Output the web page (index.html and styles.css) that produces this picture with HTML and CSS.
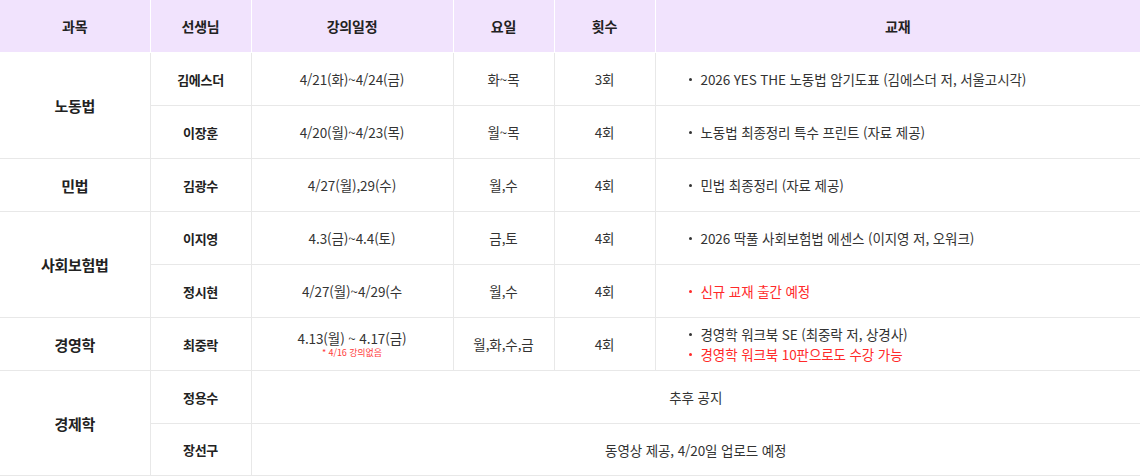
FILE: index.html
```html
<!DOCTYPE html>
<html lang="ko">
<head>
<meta charset="utf-8">
<link rel="stylesheet" href="styles.css">
</head>
<body>
<table class="sched">
  <colgroup>
    <col class="c-subj"><col class="c-teach"><col class="c-date"><col class="c-day"><col class="c-cnt"><col class="c-book">
  </colgroup>
  <thead>
    <tr><th>과목</th><th>선생님</th><th>강의일정</th><th>요일</th><th>횟수</th><th>교재</th></tr>
  </thead>
  <tbody>
    <tr>
      <td rowspan="2" class="subj">노동법</td>
      <td class="teach">김에스더</td><td>4/21(화)~4/24(금)</td><td>화~목</td><td>3회</td>
      <td class="book"><ul><li>2026 YES THE 노동법 암기도표 (김에스더 저, 서울고시각)</li></ul></td>
    </tr>
    <tr>
      <td class="teach">이장훈</td><td>4/20(월)~4/23(목)</td><td>월~목</td><td>4회</td>
      <td class="book"><ul><li>노동법 최종정리 특수 프린트 (자료 제공)</li></ul></td>
    </tr>
    <tr>
      <td class="subj">민법</td>
      <td class="teach">김광수</td><td>4/27(월),29(수)</td><td>월,수</td><td>4회</td>
      <td class="book"><ul><li>민법 최종정리 (자료 제공)</li></ul></td>
    </tr>
    <tr>
      <td rowspan="2" class="subj">사회보험법</td>
      <td class="teach">이지영</td><td>4.3(금)~4.4(토)</td><td>금,토</td><td>4회</td>
      <td class="book"><ul><li>2026 딱풀 사회보험법 에센스 (이지영 저, 오워크)</li></ul></td>
    </tr>
    <tr>
      <td class="teach">정시현</td><td>4/27(월)~4/29(수</td><td>월,수</td><td>4회</td>
      <td class="book"><ul><li class="red">신규 교재 출간 예정</li></ul></td>
    </tr>
    <tr>
      <td class="subj">경영학</td>
      <td class="teach">최중락</td>
      <td><div class="date2">4.13(월) ~ 4.17(금)</div><div class="note">* 4/16 강의없음</div></td>
      <td>월,화,수,금</td><td>4회</td>
      <td class="book"><ul class="two"><li>경영학 워크북 SE (최중락 저, 상경사)</li><li class="red">경영학 워크북 10판으로도 수강 가능</li></ul></td>
    </tr>
    <tr>
      <td rowspan="2" class="subj">경제학</td>
      <td class="teach">정용수</td><td colspan="4">추후 공지</td>
    </tr>
    <tr class="last">
      <td class="teach">장선구</td><td colspan="4">동영상 제공, 4/20일 업로드 예정</td>
    </tr>
  </tbody>
</table>
</body>
</html>
```

FILE: styles.css
```css
html, body {
  margin: 0;
  padding: 0;
  background: #fff;
}
body {
  font-family: "Noto Sans CJK KR", "Noto Sans", sans-serif;
  color: #333;
  width: 1140px;
}
.sched {
  width: 1140px;
  border-collapse: collapse;
  table-layout: fixed;
}
.c-subj { width: 150px; }
.c-teach { width: 101px; }
.c-date { width: 202px; }
.c-day { width: 101px; }
.c-cnt { width: 101px; }
.c-book { width: 485px; }
.sched th {
  height: 52px;
  padding: 0;
  background: #f1e3fd;
  font-size: 14px;
  font-weight: 700;
  color: #222;
  border-left: 1px solid #fff;
  vertical-align: middle;
  letter-spacing: -0.2px;
}
.sched th:first-child { border-left: none; }
.sched td {
  height: 52px;
  padding: 0;
  border: 1px solid #e8e8e8;
  text-align: center;
  vertical-align: middle;
  font-size: 13.5px;
  letter-spacing: -0.1px;
  color: #333;
}
.sched tbody tr:first-child td { border-top: 1px solid #fff; }
.sched tbody tr.last td { height: 51px; }
.sched td:first-child { border-left: none; }
.sched td:last-child { border-right: none; }
.sched td.subj {
  font-size: 15px;
  font-weight: 700;
  color: #222;
  letter-spacing: -0.3px;
}
.sched td.teach {
  font-weight: 700;
  font-size: 13px;
  color: #222;
  letter-spacing: -0.3px;
}
.sched td.book {
  text-align: left;
}
.book ul {
  list-style: none;
  margin: 0;
  padding: 0 0 0 32px;
}
.book li {
  position: relative;
  padding-left: 13px;
  line-height: 20px;
}
.book li::before {
  content: "";
  position: absolute;
  left: 1px;
  top: 9px;
  width: 3px;
  height: 3px;
  border-radius: 50%;
  background: #333;
}
.book li.red { color: #ff2a2a; }
.book li.red::before { background: #ff2a2a; }
.date2 { line-height: 18px; }
.note {
  font-size: 9px;
  color: #ff3b3b;
  line-height: 12px;
}
```
